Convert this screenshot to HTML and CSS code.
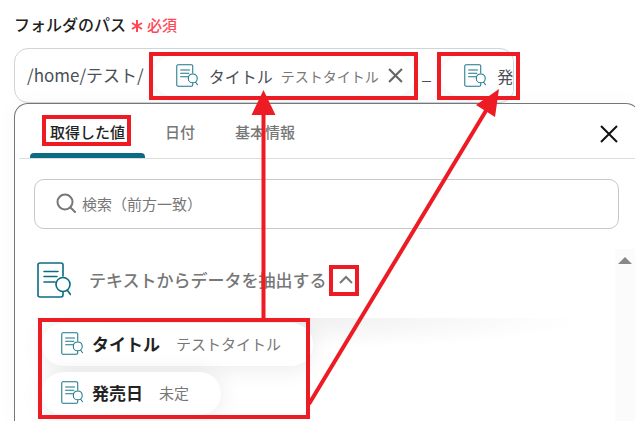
FILE: index.html
```html
<!DOCTYPE html>
<html lang="ja">
<head>
<meta charset="utf-8">
<title>フォルダのパス</title>
<link rel="stylesheet" href="styles.css">
</head>
<body>
<svg class="defs" aria-hidden="true">
  <symbol id="doc" viewBox="0 0 34 36">
    <g fill="none" stroke="currentColor" stroke-width="1.6" stroke-linecap="round" stroke-linejoin="round">
      <path d="M26 14V3q0-2-2-2H3Q1 1 1 3v30q0 2 2 2h21q2 0 2-2v-3"/>
      <path d="M7 9.500h14M7 14.500h13M7 20h11"/>
      <circle cx="26" cy="22.500" r="7"/>
      <path d="M30.500 28.500l3 4"/>
    </g>
  </symbol>
</svg>
<main class="page">
  <div class="field-label" id="path-label">フォルダのパス <span class="required"><svg class="asterisk" viewBox="0 0 12 12"><path d="M6 0v12M1 3l10 6M11 3L1 9"/></svg>必須</span></div>
  <div class="path-field" role="group" aria-labelledby="path-label">
    <span class="path-text">/home/テスト/</span>
    <span class="chip"><svg class="chip-icon"><use href="#doc"/></svg><span class="chip-name">タイトル</span><span class="chip-value">テストタイトル</span><button class="chip-remove" type="button" aria-label="削除"><svg viewBox="0 0 14 14"><path d="M1 1l12 12M13 1L1 13"/></svg></button></span>
    <span class="separator">_</span>
    <span class="chip"><svg class="chip-icon"><use href="#doc"/></svg><span class="chip-name">発</span></span>
  </div>
  <section class="panel">
    <header class="panel-head">
      <nav class="tabs" role="tablist">
        <button class="tab active" role="tab" aria-selected="true" type="button">取得した値</button>
        <button class="tab" role="tab" type="button">日付</button>
        <button class="tab" role="tab" type="button">基本情報</button>
      </nav>
      <button class="close" type="button" aria-label="閉じる"><svg viewBox="0 0 18 18"><path d="M1 1l16 16M17 1L1 17"/></svg></button>
    </header>
    <label class="search">
      <svg class="search-icon" viewBox="0 0 20 20"><circle cx="9" cy="9" r="7.500"/><path d="M14.500 14.500l4.500 4.500"/></svg>
      <input type="search" placeholder="検索（前方一致）" aria-label="検索（前方一致）">
    </label>
    <div class="results">
      <div class="result-list">
        <button class="group" type="button" aria-expanded="true">
          <svg class="group-icon"><use href="#doc"/></svg>
          <span class="group-title">テキストからデータを抽出する</span>
          <svg class="chevron" viewBox="0 0 14 9"><path d="M1 8l6-6 6 6"/></svg>
        </button>
        <div class="items">
          <button class="item" type="button"><svg class="chip-icon"><use href="#doc"/></svg><strong>タイトル</strong><span>テストタイトル</span></button>
          <button class="item" type="button"><svg class="chip-icon"><use href="#doc"/></svg><strong>発売日</strong><span>未定</span></button>
        </div>
      </div>
      <div class="scrollbar"><svg viewBox="0 0 14 7"><path d="M0 7L7 0l7 7z"/></svg></div>
    </div>
  </section>
</main>
<svg class="annotations" width="635" height="421" viewBox="0 0 635 421" aria-hidden="true">
  <g fill="none" stroke="#ed1c24" stroke-width="4">
    <rect x="151" y="54" width="265" height="44"/>
    <rect x="439" y="54" width="79" height="44"/>
    <rect x="44" y="117" width="85" height="27"/>
    <rect x="331" y="267" width="26" height="27"/>
    <rect x="40" y="320" width="268" height="97"/>
    <path d="M263.500 319V112M309 404L487 109"/>
  </g>
  <path fill="#ed1c24" d="M263.500 90l12 25h-24zM499 89l-4 28-19-12z"/>
</svg>
</body>
</html>
```
FILE: styles.css
```css
* { box-sizing: border-box; }
html, body { height: 100%; }
body {
  margin: 0;
  overflow: hidden;
  position: relative;
  background: #fff;
  color: #222;
  font-family: "Noto Sans CJK JP", sans-serif;
  font-size: 15px;
}
button, input { font: inherit; color: inherit; border: 0; background: none; padding: 0; margin: 0; }
svg { display: block; flex: none; }
.defs { position: absolute; width: 0; height: 0; }
.page { height: 100%; display: flex; flex-direction: column; padding: 0 0 0 14px; }

.field-label {
  height: 48px;
  flex: none;
  display: flex;
  align-items: center;
  gap: 5px;
  font-size: 16px;
  font-weight: 500;
}
.required { display: flex; align-items: center; gap: 4px; color: #ff4757; font-size: 15px; }
.asterisk { width: 12px; height: 12px; margin-top: 4px; fill: none; stroke: currentColor; stroke-width: 2; }

.path-field {
  height: 55px;
  flex: none;
  margin-right: 121px;
  padding-left: 12px;
  border: 1px solid #ced4da;
  border-radius: 14px;
  display: flex;
  align-items: center;
  overflow: hidden;
  white-space: nowrap;
  color: #495057;
}
.path-text { font-size: 17px; margin: 0 9px 2px 0; }
.separator { font-size: 17px; margin: 0 10px 6px 7px; }
.chip {
  height: 40px;
  flex: none;
  display: flex;
  align-items: center;
  padding: 0 12px 0 23px;
  border-radius: 20px;
  background: #fff;
  box-shadow: 0 0 14px rgba(0, 0, 0, .07);
}
.chip-icon { width: 22px; height: 23px; color: #17748b; }
.chip-name { margin-left: 11px; font-size: 16px; }
.chip-value { margin-left: 8px; font-size: 14px; color: #777; }
.chip-remove { margin-left: 9px; }
.chip-remove svg { width: 15px; height: 15px; fill: none; stroke: #666; stroke-width: 2; }

.panel {
  flex: 1;
  min-height: 0;
  margin-right: -5px;
  padding-left: 4px;
  display: flex;
  flex-direction: column;
  background: #fff;
  border: 1px solid #777;
  border-bottom: 0;
  border-radius: 14px 14px 0 0;
  box-shadow: 0 0 24px rgba(0, 0, 0, .03);
}
.panel-head {
  height: 55px;
  flex: none;
  display: flex;
  justify-content: space-between;
  border-bottom: 1px solid #ddd;
  padding: 0 21px 0 11px;
}
.tabs { display: flex; }
.tab { padding: 5px 20px 0; font-weight: 500; color: #777; border-bottom: 5px solid transparent; }
.tab.active { color: #222; position: relative; }
.tab.active::after {
  content: "";
  position: absolute;
  left: 0;
  right: 0;
  bottom: -5px;
  height: 5px;
  border-radius: 4px 4px 0 0;
  background: #0b6b83;
}
.close { padding-top: 5px; }
.close svg { width: 18px; height: 18px; fill: none; stroke: #111; stroke-width: 2; }

.search {
  height: 50px;
  flex: none;
  margin: 20px 20px 0 15px;
  padding: 0 21px 2px;
  display: flex;
  align-items: center;
  gap: 6px;
  border: 1px solid #c8c8c8;
  border-radius: 10px;
}
.search-icon { width: 20px; height: 20px; fill: none; stroke: #777; stroke-width: 2; stroke-linecap: round; }
.search input { flex: 1; min-width: 0; outline: 0; }
.search input::placeholder { color: #777; opacity: 1; }

.results { flex: 1; min-height: 0; margin-top: 20px; display: flex; }
.result-list { flex: 1; min-width: 0; }
.group {
  width: 100%;
  height: 63px;
  padding: 0 0 2px 18px;
  display: flex;
  align-items: center;
  color: #777;
}
.group-icon { width: 34px; height: 36px; color: #0b6b83; }
.group-title { margin-left: 18px; font-size: 17px; font-weight: 500; }
.chevron { width: 14px; height: 9px; margin-left: 12px; fill: none; stroke: #777; stroke-width: 2; }
.items {
  margin-right: 30px;
  padding: 11px 0 0 23px;
  display: flex;
  flex-direction: column;
  align-items: flex-start;
  gap: 6px;
  background: radial-gradient(ellipse 50% 30px at 50% 0, #f0f0f0, #fff);
  background-position: 0 6px;
  background-repeat: no-repeat;
}
.item {
  height: 43px;
  display: flex;
  align-items: center;
  padding: 0 32px 2px 19px;
  border-radius: 22px;
  background: #fff;
  box-shadow: 0 2px 24px rgba(0, 0, 0, .09);
}
.item strong { margin-left: 9px; font-size: 17px; font-weight: 700; color: #222; }
.item span { margin-left: 16px; color: #777; }
.scrollbar { width: 24px; flex: none; padding: 8px 0 0 3px; background: #fbfbfb; }
.scrollbar svg { width: 14px; height: 7px; fill: #888; }
.annotations { position: absolute; left: 0; top: 0; pointer-events: none; }
```
